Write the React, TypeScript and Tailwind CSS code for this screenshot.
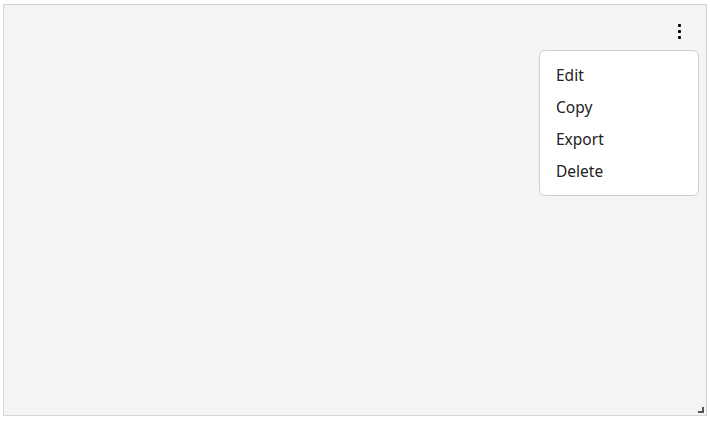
export default function App() {
  const items = ["Edit", "Copy", "Export", "Delete"];
  return (
    <div className="w-[710px] h-[422px] bg-white pl-[3px] pt-[4px]" style={{ fontFamily: '"Noto Sans", sans-serif' }}>
      <div className="relative w-[704px] h-[412px] border border-[#d6d6d6] bg-[#f4f4f4]">
        <div className="absolute left-[674px] top-[19px] w-[3px] flex flex-col gap-[3px]">
          <span className="block w-[3px] h-[3px] bg-black rounded-[1px]" />
          <span className="block w-[3px] h-[3px] bg-black rounded-[1px]" />
          <span className="block w-[3px] h-[3px] bg-black rounded-[1px]" />
        </div>
        <div className="absolute left-[535px] top-[45px] w-[160px] h-[146px] bg-white border border-[#cfcfcf] rounded-[6px] pt-[9px] pb-[7px]">
          {items.map((t) => (
            <div key={t} className="h-[32px] px-[16px] flex items-center text-[15.5px] text-[#222]">
              {t}
            </div>
          ))}
        </div>
        <svg className="absolute right-[2px] bottom-[2px]" width="6" height="6" viewBox="0 0 6 6">
          <path d="M4 0h2v6H0V4h4z" fill="#555" />
        </svg>
      </div>
    </div>
  );
}
